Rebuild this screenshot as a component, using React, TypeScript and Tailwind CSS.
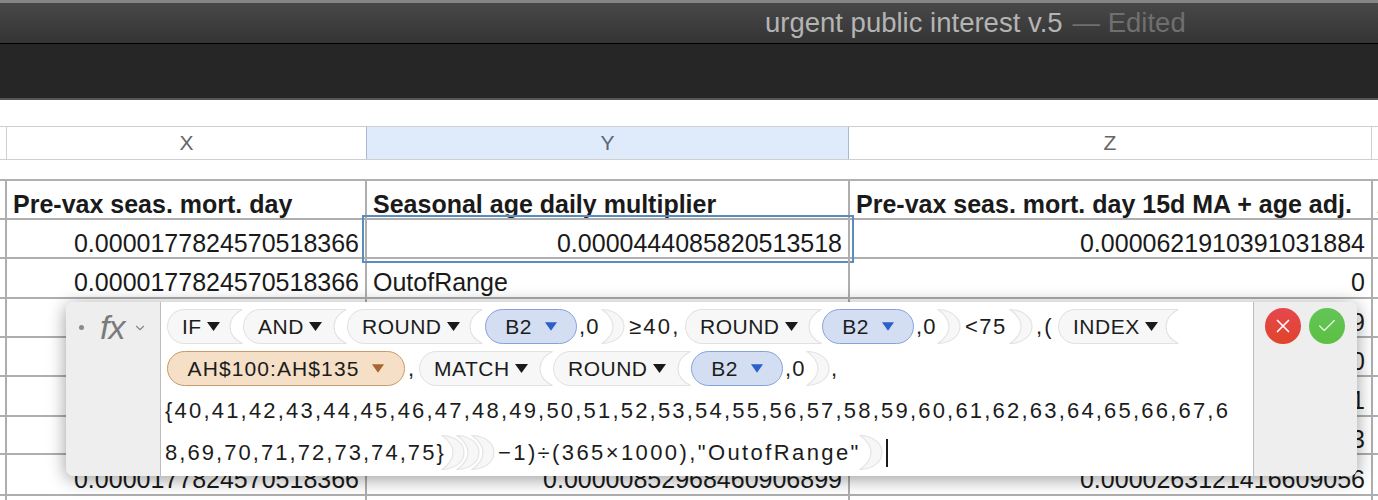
import React from "react";
import { X, Check, ChevronDown } from "lucide-react";

function Tri({ color = "#1a1a1a", w = 13, h = 9 }: { color?: string; w?: number; h?: number }) {
  return (
    <svg width={w} height={h} viewBox="0 0 13 9" className="shrink-0">
      <polygon points="0,0 13,0 6.5,9" fill={color} />
    </svg>
  );
}

function Fn({ name, cls }: { name: string; cls: string }) {
  return (
    <div className={`flex h-[35px] shrink-0 ${cls}`}>
      <div className="flex min-w-0 grow items-center gap-[5px] rounded-l-[18px] border-y border-l border-[#e2e2e2] bg-[#f7f7f7] pl-[14px] text-[21px] tracking-[0.5px] text-[#1c1c1c]">
        <span>{name}</span>
        <Tri />
      </div>
      <svg width="16" height="35" viewBox="0 0 16 35" className="-ml-px shrink-0">
        <path d="M0 0.5H15.5C6 5 3 12 3 17.5C3 23 6 30 15.5 34.5H0Z" fill="#f7f7f7" />
        <path d="M0 0.5H15.5C6 5 3 12 3 17.5C3 23 6 30 15.5 34.5H0" fill="none" stroke="#e2e2e2" strokeWidth="1.2" />
      </svg>
    </div>
  );
}

function Ref({ label, kind, cls }: { label: string; kind: "blue" | "orange"; cls: string }) {
  const blue = kind === "blue";
  return (
    <div
      className={`flex h-[35px] shrink-0 items-center justify-center gap-[13px] rounded-full border-[1.5px] text-[21px] text-[#1c1c1c] ${
        blue ? "border-[#86a2db] bg-[#d3def3] tracking-[0.4px]" : "border-[#c89b68] bg-[#f5dfc7] tracking-[1.1px]"
      } ${cls}`}
    >
      <span>{label}</span>
      <Tri color={blue ? "#2b5fc9" : "#a9652f"} w={12} h={9} />
    </div>
  );
}

function Close({ cls = "" }: { cls?: string }) {
  return (
    <svg width="24" height="35" viewBox="0 0 24 35" className={`shrink-0 ${cls}`}>
      <path
        d="M1 0.5C14 1 23 8 23 17.5C23 27 14 34 1 34.5C10 28 12 22 12 17.5C12 13 10 7 1 0.5Z"
        fill="#f7f7f7"
        stroke="#e4e4e4"
        strokeWidth="1.2"
      />
    </svg>
  );
}

function Txt({ children, cls = "" }: { children: React.ReactNode; cls?: string }) {
  return <span className={`shrink-0 whitespace-pre text-[22px] text-[#1c1c1c] ${cls}`}>{children}</span>;
}

const rows: { h: string; x: string; y: string; z: string; yLeft?: boolean; bold?: boolean }[] = [
  { h: "h-[39px]", x: "Pre-vax seas. mort. day", y: "Seasonal age daily multiplier", z: "Pre-vax seas. mort. day 15d MA + age adj.", bold: true },
  { h: "h-[39px]", x: "0.0000177824570518366", y: "0.0000444085820513518", z: "0.0000621910391031884" },
  { h: "h-[40px]", x: "0.0000177824570518366", y: "OutofRange", z: "0", yLeft: true },
  { h: "h-[39px]", x: "", y: "", z: "9" },
  { h: "h-[39px]", x: "", y: "", z: "0" },
  { h: "h-[40px]", x: "", y: "", z: "1" },
  { h: "h-[38px]", x: "", y: "", z: "3" },
  { h: "h-[41px]", x: "0.0000177824570518366", y: "0.00000852968460906899", z: "0.0000263121416609056" },
  { h: "h-[10px]", x: "", y: "", z: "" },
];

export default function App() {
  return (
    <div className="relative h-[500px] w-[1378px] overflow-hidden bg-white font-['Liberation_Sans',Arial,sans-serif]">
      {/* title bar */}
      <div className="flex h-[44px] items-center border-t-[3px] border-b border-t-[#858585] border-b-black bg-gradient-to-b from-[#484848] to-[#343434] pl-[765px] text-[27.5px] leading-none">
        <span className="text-[#b4b4b4]">urgent public interest v.5</span>
        <span className="ml-[10px] text-[#6f6f6f]">— Edited</span>
      </div>
      {/* toolbar */}
      <div className="h-[56px] border-b-2 border-[#565656] bg-[#262626]" />
      {/* gap */}
      <div className="h-[26px] bg-white" />
      {/* column headers */}
      <div className="grid h-[34px] grid-cols-[7px_359px_483px_523px_6px] border-y border-[#cfcfcf] text-[21px] text-[#666]">
        <div className="border-r border-[#cfcfcf]" />
        <div className="flex items-center justify-center">X</div>
        <div className="flex items-center justify-center border-x border-[#a9b8cd] bg-[#dfebfb] text-[#5d6673]">Y</div>
        <div className="flex items-center justify-center border-r border-[#cfcfcf]">Z</div>
        <div />
      </div>
      <div className="h-[19px] bg-white" />
      {/* table */}
      <div className="border-t-[2px] border-[#b0b0b0] text-[25px] leading-none text-[#1a1a1a]">
        {rows.map((r, i) => (
          <div key={i} className={`grid grid-cols-[7px_360px_483px_523px_5px] border-b-[2px] border-[#aeaeae] ${r.h} ${r.bold ? "font-bold" : ""} ${i === 8 ? "border-b-0" : ""}`}>
            <div className="border-r-[2px] border-[#aeaeae]" />
            <div className={`flex items-center overflow-hidden whitespace-nowrap border-r-[2px] border-[#aeaeae] px-[6px] pt-[9px] ${r.bold ? "justify-start" : "justify-end"}`}>{r.x}</div>
            <div className={`relative flex items-center whitespace-nowrap border-r-[2px] border-[#aeaeae] px-[6px] pt-[9px] ${r.bold || r.yLeft ? "justify-start" : "justify-end"}`}>
              {i === 1 && <div className="absolute -left-[5px] -top-[5px] h-[48px] w-[492px] border-2 border-[#5b8cc0]" />}
              {r.y}
            </div>
            <div className={`flex items-center whitespace-nowrap border-r-[2px] border-[#aeaeae] pl-[6px] pr-[6px] pt-[9px] ${r.bold ? "justify-start" : "justify-end"}`}>{r.z}</div>
            <div className="flex items-center overflow-hidden pl-[4px] pt-[9px]">{r.bold ? "A" : ""}</div>
          </div>
        ))}
      </div>

      {/* formula editor */}
      <div className="absolute left-[66px] top-[302px] flex h-[174px] w-[1291px] overflow-hidden rounded-[8px] bg-white shadow-[0_3px_18px_rgba(0,0,0,0.4)]">
        <div className="flex h-full w-[95px] shrink-0 items-start border-r border-[#bdbdbd] bg-[#eeeeee] pl-[13px] pt-[5px] text-[#7b7b7b]">
          <span className="mt-[18px] h-[5px] w-[5px] rounded-full bg-[#8a8a8a]" />
          <span className="ml-[16px] text-[34px] italic leading-[40px] tracking-[-1px]">fx</span>
          <ChevronDown className="ml-[9px] mt-[14px] h-[14px] w-[14px] text-[#888]" strokeWidth={2} />
        </div>

        <div className="flex min-w-0 grow flex-col pl-[6px] pt-[7px]">
          <div className="flex h-[35px] items-center">
            <Fn name="IF" cls="w-[76px]" />
            <Fn name="AND" cls="w-[104px]" />
            <Fn name="ROUND" cls="w-[136px]" />
            <Ref label="B2" kind="blue" cls="ml-[2px] w-[92px]" />
            <Txt cls="ml-[2px] w-[21px] tracking-[1.2px]">,0</Txt>
            <Close cls="ml-[1px]" />
            <Txt cls="ml-[4px] w-[56px] tracking-[2.2px]">≥40,</Txt>
            <Fn name="ROUND" cls="w-[137px]" />
            <Ref label="B2" kind="blue" cls="w-[92px]" />
            <Txt cls="ml-[2px] w-[21px] tracking-[1.2px]">,0</Txt>
            <Close />
            <Txt cls="ml-[4px] w-[44px] tracking-[1.5px]">{"<75"}</Txt>
            <Close />
            <Txt cls="ml-[3px] w-[22px] tracking-[2.2px]">,(</Txt>
            <Fn name="INDEX" cls="w-[121px]" />
          </div>
          <div className="mt-[7px] flex h-[35px] items-center">
            <Ref label="AH$100:AH$135" kind="orange" cls="w-[238px]" />
            <Txt cls="ml-[3px] w-[11px]">,</Txt>
            <Fn name="MATCH" cls="w-[134px]" />
            <Fn name="ROUND" cls="w-[138px]" />
            <Ref label="B2" kind="blue" cls="w-[92px]" />
            <Txt cls="ml-[2px] w-[21px] tracking-[1.2px]">,0</Txt>
            <Close />
            <Txt cls="ml-[1px]">,</Txt>
          </div>
          <div className="mt-[7px] flex h-[35px] items-center">
            <Txt cls="-ml-[2px] tracking-[2.2px]">{"{40,41,42,43,44,45,46,47,48,49,50,51,52,53,54,55,56,57,58,59,60,61,62,63,64,65,66,67,6"}</Txt>
          </div>
          <div className="mt-[7px] flex h-[35px] items-center">
            <Txt cls="-ml-[2px] w-[279px] tracking-[2.05px]">{"8,69,70,71,72,73,74,75}"}</Txt>
            <Close cls="-ml-[3px]" />
            <Close cls="-ml-[9px]" />
            <Close cls="-ml-[9px]" />
            <Txt cls="ml-[3px] w-[362px] tracking-[2.4px]">{'−1)÷(365×1000),"OutofRange"'}</Txt>
            <Close cls="-ml-[1px]" />
            <span className="ml-[3px] h-[28px] w-[2px] shrink-0 bg-[#1a1a1a]" />
          </div>
        </div>

        <div className="flex h-full w-[104px] shrink-0 items-start gap-[8px] border-l border-[#bdbdbd] bg-[#eeeeee] pl-[11px] pt-[6px]">
          <span className="flex h-[36px] w-[36px] items-center justify-center rounded-full bg-gradient-to-b from-[#e6474d] to-[#e04428]">
            <X className="h-[22px] w-[22px] text-white" strokeWidth={1.8} />
          </span>
          <span className="flex h-[36px] w-[36px] items-center justify-center rounded-full bg-gradient-to-b from-[#62c557] to-[#5cc043]">
            <Check className="h-[22px] w-[22px] text-[#e4f5dc]" strokeWidth={1.5} />
          </span>
        </div>
      </div>
    </div>
  );
}
